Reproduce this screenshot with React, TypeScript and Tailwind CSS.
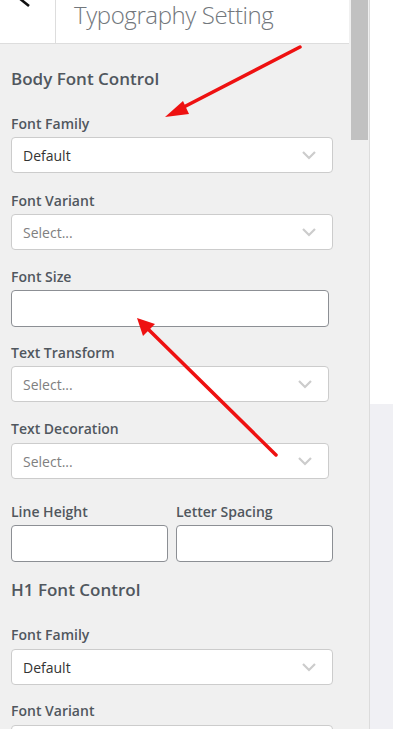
const font = { fontFamily: '"Open Sans", "Noto Sans", Arial, sans-serif' };

const Chevron = () => (
  <svg width="16" height="10" viewBox="0 0 16 10" className="shrink-0">
    <path d="M2 2 L8 8 L14 2" fill="none" stroke="#cccccc" strokeWidth="2.2" />
  </svg>
);

const Label = ({ text, className = "" }: { text: string; className?: string }) => (
  <div className={"h-5 leading-5 text-[14px] font-semibold text-[#50575e] " + className}>{text}</div>
);

const Select = ({ value, w = "w-[322px]" }: { value?: string; w?: string }) => (
  <div className={`${w} h-[36px] bg-white border border-[#cccccc] rounded-[4px] flex items-center justify-between pl-[11px] pr-[15px]`}>
    <span className={"text-[14px] " + (value ? "text-[#333333]" : "text-[#808080]")}>{value ?? "Select..."}</span>
    <Chevron />
  </div>
);

const Input = ({ w = "w-[318px]" }: { w?: string }) => (
  <div className={`${w} h-[37px] bg-white border border-[#8c8f94] rounded-[4px]`} />
);

export default function App() {
  return (
    <div className="relative w-[393px] h-[729px] overflow-hidden flex bg-white" style={font}>
      {/* left panel */}
      <div className="w-[349px] h-full flex flex-col bg-[#f0f0f0]">
        <div className="h-[44px] shrink-0 bg-white border-b border-[#dddddd] flex">
          <div className="w-[56px] h-full border-r border-[#dddddd] relative">
            <svg width="56" height="44" className="absolute left-0 top-0">
              <path d="M14 -6 L29 6" stroke="#111" strokeWidth="2.6" fill="none" />
            </svg>
          </div>
          <div className="pl-[18px] -mt-[5px] text-[24px] tracking-[-0.4px] font-light text-[#72777c] leading-[40px]">Typography Setting</div>
        </div>

        <div className="pl-[11px] pt-[24px]">
          <div className="h-[22px] leading-[22px] text-[17px] font-semibold text-[#50575e]">Body Font Control</div>

          <Label text="Font Family" className="mt-[24px] mb-[3px]" />
          <Select value="Default" />

          <Label text="Font Variant" className="mt-[18px] mb-[3px]" />
          <Select />

          <Label text="Font Size" className="mt-[17px] mb-[3px]" />
          <Input />

          <Label text="Text Transform" className="mt-[16px] mb-[3px]" />
          <Select w="w-[318px]" />

          <Label text="Text Decoration" className="mt-[17px] mb-[4px]" />
          <Select w="w-[318px]" />

          <div className="flex gap-[8px] mt-[23px]">
            <div>
              <Label text="Line Height" className="mb-[3px]" />
              <Input w="w-[157px]" />
            </div>
            <div>
              <Label text="Letter Spacing" className="mb-[3px]" />
              <Input w="w-[157px]" />
            </div>
          </div>

          <div className="mt-[17px] h-[22px] leading-[22px] text-[17px] font-semibold text-[#50575e]">H1 Font Control</div>

          <Label text="Font Family" className="mt-[24px] mb-[4px]" />
          <Select value="Default" />

          <Label text="Font Variant" className="mt-[16px] mb-[4px]" />
          <Select />
        </div>
      </div>

      {/* scrollbar */}
      <div className="w-[21px] h-full bg-[#f0f0f0] border-r border-[#dcdcdc] pl-[2px] pr-[2px]">
        <div className="w-[17px] h-[140px] bg-[#c1c1c1]" />
      </div>

      {/* right side */}
      <div className="flex-1 flex flex-col">
        <div className="h-[404px] bg-white" />
        <div className="flex-1 bg-[#f0f0f4]" />
      </div>

      {/* annotation arrows */}
      <svg className="absolute inset-0 pointer-events-none" width="393" height="729">
        <line x1="300" y1="47" x2="178" y2="110" stroke="#ee1111" strokeWidth="3.5" strokeLinecap="round" />
        <polygon points="165,117 183,101 189,114" fill="#ee1111" />
        <line x1="276" y1="455" x2="148" y2="329" stroke="#ee1111" strokeWidth="3.5" strokeLinecap="round" />
        <polygon points="137,318 155,324 143,336" fill="#ee1111" />
      </svg>
    </div>
  );
}
